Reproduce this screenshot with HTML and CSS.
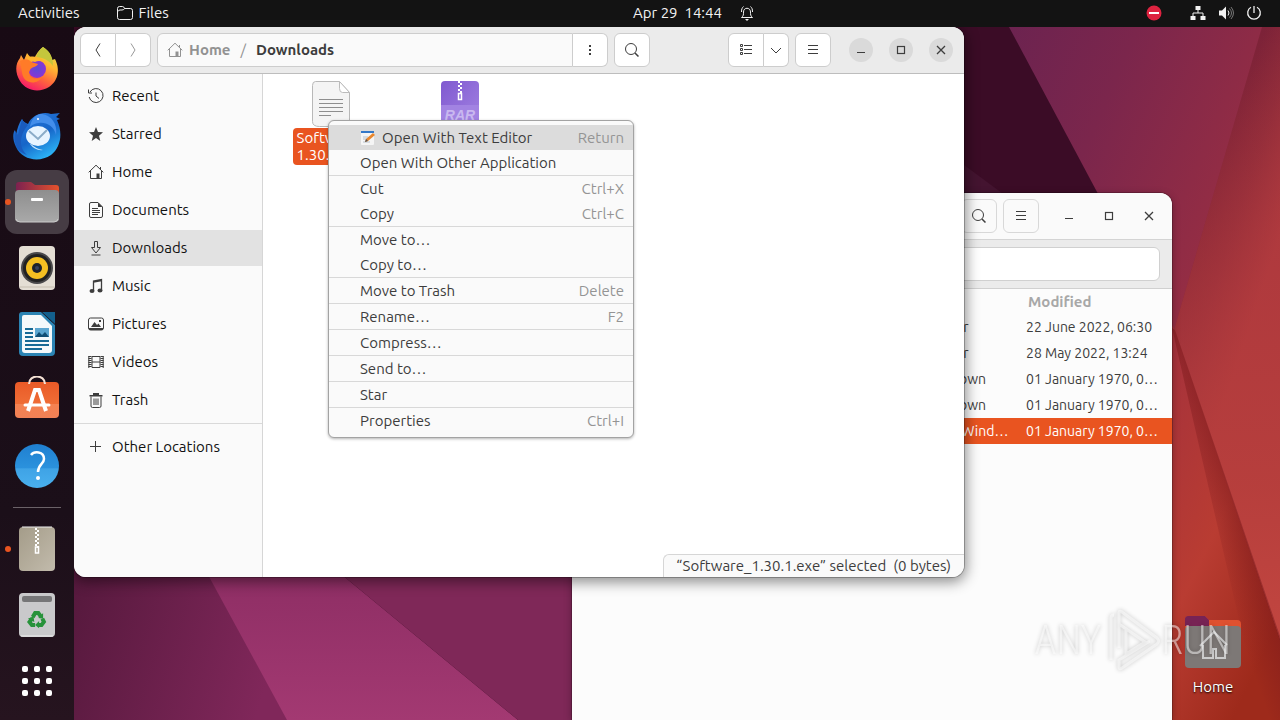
FILE: index.html
```html
<!DOCTYPE html>
<html lang="en">

<head>
    <meta charset="UTF-8">
    <meta name="viewport" content="width=device-width, initial-scale=1.0">
    <title>Files</title>
    <link rel="stylesheet" href="styles.css">
</head>

<body>
    <svg class="sprite" aria-hidden="true">
        <symbol id="i-search" viewBox="0 0 16 16"><circle cx="7" cy="7" r="5.500" fill="none" stroke="currentColor" /><path d="M11 11l3.500 3.500" fill="none" stroke="currentColor" stroke-width="1.500" /></symbol>
        <symbol id="i-menu" viewBox="0 0 16 16"><path d="M3 3.500h10M3 7.500h10M3 11.500h10" fill="none" stroke="currentColor" /></symbol>
        <symbol id="i-min" viewBox="0 0 16 16"><path d="M4 10.500h8" fill="none" stroke="currentColor" stroke-width="1.200" /></symbol>
        <symbol id="i-max" viewBox="0 0 16 16"><rect x="4.500" y="4.500" width="7" height="7" fill="none" stroke="currentColor" stroke-width="1.200" /></symbol>
        <symbol id="i-close" viewBox="0 0 16 16"><path d="M4 4l8 8M12 4l-8 8" fill="none" stroke="currentColor" stroke-width="1.300" /></symbol>
        <symbol id="i-home" viewBox="0 0 16 16"><path d="M.7 8.300L8 1.200l7.300 7.100M2.500 7v7.500h11V7M12.500 5.500V3" fill="none" stroke="currentColor" /><path d="M8.500 9.500h3v5h-3z" fill="currentColor" /></symbol>
    </svg>

    <svg class="wallpaper" viewBox="0 0 1280 720" preserveAspectRatio="none" aria-hidden="true">
        <defs>
            <linearGradient id="w-base" x1="0" y1="0" x2="1" y2="0.600">
                <stop offset="0" stop-color="#6c2350" />
                <stop offset="0.350" stop-color="#7b264c" />
                <stop offset="1" stop-color="#a03040" />
            </linearGradient>
            <linearGradient id="w-right" gradientUnits="userSpaceOnUse" x1="1215" y1="180" x2="1290" y2="205">
                <stop offset="0" stop-color="#7c2238" />
                <stop offset="0.400" stop-color="#8c2a3a" />
                <stop offset="1" stop-color="#ab383f" />
            </linearGradient>
            <linearGradient id="w-mid" x1="0" y1="0" x2="0" y2="1">
                <stop offset="0" stop-color="#b53c3c" stop-opacity="0" />
                <stop offset="0.400" stop-color="#b53c3c" stop-opacity="0.500" />
                <stop offset="0.750" stop-color="#b83f3c" stop-opacity="0.900" />
                <stop offset="1" stop-color="#c24640" />
            </linearGradient>
            <linearGradient id="w-low" x1="0" y1="0" x2="0.600" y2="1">
                <stop offset="0" stop-color="#a1303e" />
                <stop offset="0.600" stop-color="#b93c32" />
                <stop offset="1" stop-color="#9e2a1b" />
            </linearGradient>
            <linearGradient id="w-left" gradientUnits="userSpaceOnUse" x1="74" y1="577" x2="280" y2="640">
                <stop offset="0" stop-color="#56193d" />
                <stop offset="1" stop-color="#80275a" />
            </linearGradient>
            <linearGradient id="w-band" x1="0" y1="0" x2="0" y2="1">
                <stop offset="0" stop-color="#8c2d63" />
                <stop offset="1" stop-color="#a33972" />
            </linearGradient>
            <linearGradient id="w-shade" gradientUnits="userSpaceOnUse" x1="1200" y1="520" x2="1240" y2="506">
                <stop offset="0" stop-color="#7d1a1c" stop-opacity="0" />
                <stop offset="1" stop-color="#7d1a1c" stop-opacity="0.600" />
            </linearGradient>
        </defs>
        <rect width="1280" height="720" fill="#3b0c26" />
        <path d="M1009 27H1280V400H1208z" fill="url(#w-base)" />
        <path d="M960 162l50 37h-50z" fill="#441430" />
        <path d="M1262 27H1280V640L1174 330z" fill="url(#w-right)" />
        <path d="M1262 27H1280V640L1174 330z" fill="url(#w-mid)" />
        <path d="M1160 310l14 18L1280 640V720H1160z" fill="url(#w-low)" />
        <path d="M1172 328l3 2L1280 636V720H1262z" fill="url(#w-shade)" />
        <path d="M0 560H260L290 720H0z" fill="url(#w-left)" />
        <path d="M200 560H324L518 720H287z" fill="url(#w-band)" />
        <path d="M324 560H580V720H518z" fill="#7f2858" />
    </svg>

    <header class="topbar">
        <div class="topbar-left">
            <button class="top-button">Activities</button>
            <button class="top-button">
                <svg class="icon" viewBox="0 0 16 16"><path d="M.5 12.500v-9q0-2 2-2h3q1.500 0 2 2h6q2 0 2 2v7q0 2-2 2h-11q-2 0-2-2zM1 6.500q.5-1.500 2-1.500h2q2 0 2.500-1.500" fill="none" stroke="currentColor" /></svg>
                Files
            </button>
        </div>
        <button class="top-button clock">
            <span>Apr 29&nbsp; 14:44</span>
            <svg class="icon" viewBox="0 0 16 16"><path d="M2.500 12.500c2-1.500 2-3 2-5.500 0-5 7-5 7 0 0 2.500 0 4 2 5.500zM2.500 7c0-3 .5-4 2-5.500M13.500 7c0-3-.5-4-2-5.500" fill="none" stroke="currentColor" /><path d="M6 14h4l-2 2z" fill="currentColor" /></svg>
        </button>
        <div class="tray">
            <button class="top-button" aria-label="Do not disturb"><svg class="icon" viewBox="0 0 16 16"><circle cx="8" cy="8" r="7.500" fill="#dd2340" /><path d="M3 7h10v2H3z" fill="#fff" /></svg></button>
            <button class="top-button status" aria-label="System">
                <svg class="icon" viewBox="0 0 16 16"><path d="M5.500 1h5v4h-5zM.5 11h5v4h-5zM10.500 11h5v4h-5z" fill="currentColor" /><path d="M8 5v3M3 11V8h10v3" fill="none" stroke="currentColor" /></svg>
                <svg class="icon" viewBox="0 0 16 16"><path d="M1 5.500h3L8 1.500v13l-4-4H1z" fill="currentColor" /><path d="M10 5.500q2 2.500 0 5" fill="none" stroke="currentColor" /><path d="M11.500 3.500q4 4.500 0 9M13 2q5 6 0 12" fill="none" stroke="#777" /></svg>
                <svg class="icon" viewBox="0 0 16 16"><path d="M8 1v7M5 2.300a6.300 6.300 0 1 0 6 0" fill="none" stroke="currentColor" stroke-width="1.300" /></svg>
            </button>
        </div>
    </header>

    <nav class="dock" aria-label="Dock">
        <button class="dock-item" aria-label="Firefox">
            <svg viewBox="0 0 48 48">
                <defs>
                    <linearGradient id="ff" x1="0.800" y1="0" x2="0.300" y2="1"><stop offset="0" stop-color="#d9e04b" /><stop offset="0.350" stop-color="#ffb932" /><stop offset="0.650" stop-color="#ff6a3a" /><stop offset="1" stop-color="#f5156c" /></linearGradient>
                    <radialGradient id="ffc"><stop offset="0" stop-color="#5a4bd8" /><stop offset="1" stop-color="#8b35d4" /></radialGradient>
                </defs>
                <path d="M30 1c6 4 8 8 9 13l3-1c6 12 2 23-6 28-10 6-23 4-29-6C2 27 2 18 7 12l1-3 3 5 3-7c2 3 4 5 7 6 2-5 5-9 9-12z" fill="url(#ff)" />
                <path d="M30 1c8 5 10 11 10 19-4-6-12-10-17-8 1-5 4-9 7-11z" fill="#c4c63c" />
                <circle cx="24" cy="23" r="9" fill="url(#ffc)" />
                <path d="M7 15c4-2 9-2 11 1l7 2c-1 3-7 3-8 6-4 7 6 11 12 7-4 8-19 8-20-5z" fill="#ff7b28" />
                <path d="M13 12c6-3 18-2 22 9-4-6-9-7-13-5-4-1-6-2-9-4z" fill="#ffb52e" />
            </svg>
        </button>
        <button class="dock-item" aria-label="Thunderbird">
            <svg viewBox="0 0 48 48">
                <defs><linearGradient id="tb" x1="0" y1="0" x2="0.600" y2="1"><stop offset="0" stop-color="#2a7be0" /><stop offset="0.600" stop-color="#1665c8" /><stop offset="1" stop-color="#2bb0f4" /></linearGradient></defs>
                <path d="M9 7c1 3 4 4 6 5C19 3 30-1 38 2l9-1c-2 1-2 3-4 4l4 2-3 1c6 13 4 27-6 35-12 8-29 5-35-8C-1 27 0 20 2 18l1 5C4 17 6 11 9 7z" fill="url(#tb)" />
                <path d="M15 13C8 21 4 34 14 43 4 40 0 31 2 19l3 4c1-6 3-11 4-16 1 3 4 4 6 6z" fill="#195bbd" />
                <path d="M27 2c11 0 18 10 16 21-2-9-10-13-17-12-3 0-6 1-9 4 1-7 5-12 10-13z" fill="#438eeb" />
                <circle cx="25" cy="7" r="1" fill="#fff" />
                <ellipse cx="25" cy="24" rx="12" ry="10" fill="#e7f4ff" />
                <path d="M16 19l9 8 9-9" fill="none" stroke="#8bacc8" stroke-width="2" />
                <path d="M18 32q5 5 12 6-8 1-13-6z" fill="#c8e6fb" />
            </svg>
        </button>
        <button class="dock-item active running" aria-label="Files">
            <svg viewBox="0 0 48 48">
                <defs><linearGradient id="fo"><stop offset="0" stop-color="#7c2150" /><stop offset="1" stop-color="#e5522c" /></linearGradient><linearGradient id="fg" x1="0" y1="0" x2="0" y2="1"><stop offset="0" stop-color="#8e8e8e" /><stop offset="1" stop-color="#a9a9a9" /></linearGradient></defs>
                <path d="M3 13V7q0-3 3-3h12l4 3h21q3 0 3 3v7H3z" fill="url(#fo)" />
                <rect x="2" y="12" width="44" height="32" rx="4" fill="url(#fg)" />
                <path d="M3 41q1 3 4 3h34q3 0 4-3" fill="none" stroke="#ccc" />
                <rect x="18" y="20" width="12" height="3" rx="1" fill="#fff" />
            </svg>
        </button>
        <button class="dock-item" aria-label="Rhythmbox">
            <svg viewBox="0 0 48 48">
                <rect x="6" y="2" width="36" height="44" rx="4" fill="#e4ded4" /><path d="M7 43h34" stroke="#c6beb0" />
                <circle cx="24" cy="24" r="16" fill="#4a494b" /><circle cx="24" cy="24" r="14" fill="#222" /><circle cx="24" cy="24" r="11" fill="#f4bf22" />
                <circle cx="24" cy="24" r="5" fill="#1d222c" /><circle cx="24" cy="24" r="2" fill="#36425f" />
            </svg>
        </button>
        <button class="dock-item" aria-label="LibreOffice Writer">
            <svg viewBox="0 0 48 48">
                <path d="M9 2h19l14 13v27q0 4-4 4H10q-4 0-4-4V5q0-3 3-3z" fill="#2b84b4" />
                <path d="M29 2h13v12z" fill="#135f8c" />
                <path d="M11 5h17l11 11v24q0 3-3 3H12q-3 0-3-3V7q0-2 2-2z" fill="#f4f9fb" />
                <path d="M12 19h8M12 23h8M12 27h8M12 31h24M12 35h24M12 39h17" stroke="#176a96" stroke-width="2" />
                <path d="M22 18h14v9H22z" fill="#5ba6d0" /><path d="M22 27l4-5 3 3 3-3 4 5z" fill="#114f75" />
            </svg>
        </button>
        <button class="dock-item" aria-label="Ubuntu Software">
            <svg viewBox="0 0 48 48">
                <defs><linearGradient id="us" x1="0" y1="0" x2="0" y2="1"><stop offset="0" stop-color="#e95a27" /><stop offset="0.600" stop-color="#ef6d36" /><stop offset="0.610" stop-color="#f48251" /><stop offset="1" stop-color="#f18156" /></linearGradient></defs>
                <rect x="2" y="6" width="44" height="36" rx="4" fill="url(#us)" />
                <path d="M16 8c0-10 16-10 16 0" fill="none" stroke="#f4e1d4" stroke-width="2" />
                <path d="M15 35l7-21h4l7 21" fill="none" stroke="#fff" stroke-width="4" /><path d="M12 29h24" stroke="#fff" stroke-width="3" stroke-linecap="round" />
            </svg>
        </button>
        <button class="dock-item" aria-label="Help">
            <svg viewBox="0 0 48 48">
                <defs><linearGradient id="hp" x1="0" y1="0" x2="0" y2="1"><stop offset="0" stop-color="#1f7fd0" /><stop offset="0.550" stop-color="#2b92dd" /><stop offset="0.560" stop-color="#3fa3e6" /><stop offset="1" stop-color="#49b0ee" /></linearGradient></defs>
                <circle cx="24" cy="24" r="22" fill="url(#hp)" />
                <path d="M18 13c3-4 13-4 13 4 0 5-6 5-6 13" fill="none" stroke="#fff" stroke-width="2.500" /><circle cx="25" cy="36" r="2" fill="#fff" />
            </svg>
        </button>
        <hr class="dock-line">
        <button class="dock-item running" aria-label="Archive Manager">
            <svg viewBox="0 0 48 48">
                <defs><linearGradient id="ar" x1="0" y1="0" x2="1" y2="1"><stop offset="0" stop-color="#a49c89" /><stop offset="1" stop-color="#c2bbac" /></linearGradient></defs>
                <rect x="6" y="2" width="36" height="44" rx="4" fill="url(#ar)" /><path d="M9 2h30" stroke="#eee" />
                <path d="M23 3v18M25 5v18" stroke="#fff" stroke-width="2" stroke-dasharray="2 2" /><path d="M22.500 22h3v6h-3z" fill="none" stroke="#fff" stroke-width="1.500" />
            </svg>
        </button>
        <button class="dock-item" aria-label="Trash">
            <svg viewBox="0 0 48 48">
                <rect x="6" y="2" width="36" height="44" rx="4" fill="#c9c9cb" /><path d="M8 45h32" stroke="#eee" /><rect x="9" y="5" width="30" height="6" rx="2" fill="#767678" />
                <g transform="translate(4.500 4.500) scale(.8)"><g fill="none" stroke="#27923a" stroke-width="5"><path d="M19 27l3-5h4l3 4" /><path d="M31 29l2 4-3 4h-4" /><path d="M22 37h-4l-3-4 3-4" /></g>
                <path d="M26 28l6 1V22zM27 32v9l-5-4zM13 29l7-3 1 7z" fill="#27923a" /></g>
            </svg>
        </button>
        <button class="dock-item" aria-label="Show Applications">
            <svg viewBox="0 0 48 48" fill="#fff"><rect x="9" y="9" width="6" height="6" rx="2" /><rect x="21" y="9" width="6" height="6" rx="2" /><rect x="33" y="9" width="6" height="6" rx="2" /><rect x="9" y="21" width="6" height="6" rx="2" /><rect x="21" y="21" width="6" height="6" rx="2" /><rect x="33" y="21" width="6" height="6" rx="2" /><rect x="9" y="33" width="6" height="6" rx="2" /><rect x="21" y="33" width="6" height="6" rx="2" /><rect x="33" y="33" width="6" height="6" rx="2" /></svg>
        </button>
    </nav>

    <main class="desktop">
        <a class="desktop-icon" href="#home">
            <svg viewBox="0 0 60 60">
                <path d="M2 14V7q0-3 3-3h17l4 4h28q4 0 4 4v6H2z" fill="#df5130" /><path d="M2 14V7q0-3 3-3h17l4 4v6z" fill="#772354" />
                <rect x="2" y="14" width="56" height="42" rx="4" fill="#7d7876" />
                <path d="M17 34l14-14 13 13M20 33v13h10v-9h3v9h9V33" fill="none" stroke="#ccc" stroke-width="2" />
            </svg>
            Home
        </a>

        <section class="window archive">
            <header class="titlebar">
                <button class="tool" aria-label="Search"><svg class="icon"><use href="#i-search" /></svg></button>
                <button class="tool" aria-label="Menu"><svg class="icon"><use href="#i-menu" /></svg></button>
                <div class="controls">
                    <button class="control" aria-label="Minimize"><svg class="icon"><use href="#i-min" /></svg></button>
                    <button class="control" aria-label="Maximize"><svg class="icon"><use href="#i-max" /></svg></button>
                    <button class="control" aria-label="Close"><svg class="icon"><use href="#i-close" /></svg></button>
                </div>
            </header>
            <div class="location">
                <input class="location-input" type="text" aria-label="Location">
            </div>
            <table class="listing">
                <colgroup>
                    <col>
                    <col class="col-type">
                    <col class="col-date">
                </colgroup>
                <thead>
                    <tr><th></th><th></th><th>Modified</th></tr>
                </thead>
                <tbody>
                    <tr><td></td><td>Folder</td><td>22 June 2022, 06:30</td></tr>
                    <tr><td></td><td>Folder</td><td>28 May 2022, 13:24</td></tr>
                    <tr><td></td><td>unknown</td><td>01 January 1970, 01:00</td></tr>
                    <tr><td></td><td>unknown</td><td>01 January 1970, 01:00</td></tr>
                    <tr class="selected"><td></td><td>DOS/Windows executable</td><td>01 January 1970, 01:00</td></tr>
                </tbody>
            </table>
        </section>

        <section class="window files">
            <header class="titlebar">
                <div class="group">
                    <button class="tool" aria-label="Back"><svg class="icon" viewBox="0 0 16 16"><path d="M10 1.500L6 8l4 6.500" fill="none" stroke="currentColor" /></svg></button>
                    <button class="tool" aria-label="Forward" disabled><svg class="icon" viewBox="0 0 16 16"><path d="M6 1.500L10 8l-4 6.500" fill="none" stroke="currentColor" /></svg></button>
                </div>
                <div class="group path">
                    <div class="crumbs">
                        <a class="crumb" href="#home"><svg class="icon"><use href="#i-home" /></svg>Home</a>
                        <span class="slash">/</span>
                        <a class="crumb current" href="#downloads">Downloads</a>
                    </div>
                    <button class="tool" aria-label="Folder menu"><svg class="icon" viewBox="0 0 16 16"><path d="M7 3h2v2H7zM7 7h2v2H7zM7 11h2v2H7z" fill="currentColor" /></svg></button>
                </div>
                <button class="tool" aria-label="Search"><svg class="icon"><use href="#i-search" /></svg></button>
                <div class="group view">
                    <button class="tool" aria-label="List view"><svg class="icon" viewBox="0 0 16 16"><path d="M2.500 2.500h2v2h-2zM2.500 6.500h2v2h-2zM2.500 10.500h2v2h-2zM6 3.500h8M6 7.500h8M6 11.500h8" fill="none" stroke="currentColor" /></svg></button>
                    <button class="tool narrow" aria-label="View options"><svg class="icon" viewBox="0 0 16 16"><path d="M3 6l5 5 5-5" fill="none" stroke="currentColor" /></svg></button>
                </div>
                <button class="tool" aria-label="Menu"><svg class="icon"><use href="#i-menu" /></svg></button>
                <div class="controls">
                    <button class="control" aria-label="Minimize"><svg class="icon"><use href="#i-min" /></svg></button>
                    <button class="control" aria-label="Maximize"><svg class="icon"><use href="#i-max" /></svg></button>
                    <button class="control" aria-label="Close"><svg class="icon"><use href="#i-close" /></svg></button>
                </div>
            </header>
            <div class="window-body">
                <nav class="sidebar" aria-label="Places">
                    <a class="place" href="#recent"><svg class="icon" viewBox="0 0 16 16"><path d="M2 4a7 7 0 1 1-.8 5M.5 1.500V5H4M8 4.500V8l3 2.500" fill="none" stroke="currentColor" /></svg>Recent</a>
                    <a class="place" href="#starred"><svg class="icon" viewBox="0 0 16 16"><path d="M8 1l2 5 5 .3-4 3.400 1.300 5.300L8 12l-4.300 3L5 9.700 1 6.300 6 6z" fill="currentColor" /></svg>Starred</a>
                    <a class="place" href="#home"><svg class="icon"><use href="#i-home" /></svg>Home</a>
                    <a class="place" href="#documents"><svg class="icon" viewBox="0 0 16 16"><path d="M3 .5h7l4.500 4.500v9q0 1.500-1.500 1.500H3q-1.500 0-1.500-1.500V2q0-1.500 1.500-1.500zM4 6.500h6M4 8.500h8M4 10.500h8M4 12.500h6" fill="none" stroke="currentColor" /><path d="M10 .5V5h4.500z" fill="currentColor" /></svg>Documents</a>
                    <a class="place current" href="#downloads"><svg class="icon" viewBox="0 0 16 16"><path d="M6.500 1.500h3v6h3L8 13 3.500 7.500h3zM3.500 15h9" fill="none" stroke="currentColor" /></svg>Downloads</a>
                    <a class="place" href="#music"><svg class="icon" viewBox="0 0 16 16"><path d="M5.500 13V3l8-1.500V12M5.500 4l8-1.500" fill="none" stroke="currentColor" stroke-width="1.300" /><ellipse cx="4" cy="13" rx="2.500" ry="2" fill="currentColor" /><ellipse cx="12" cy="12.500" rx="2.500" ry="2" fill="currentColor" /></svg>Music</a>
                    <a class="place" href="#pictures"><svg class="icon" viewBox="0 0 16 16"><rect x=".5" y="2" width="15" height="12" rx="2" fill="none" stroke="currentColor" /><path d="M3 11l3.500-5L9 9l1.500-1.500L13 11zM11 4h2v2h-2zM1 12h14v2H1z" fill="currentColor" /></svg>Pictures</a>
                    <a class="place" href="#videos"><svg class="icon" viewBox="0 0 16 16"><path d="M4 2.500h8v11H4zM4 8h8" fill="none" stroke="currentColor" /><path d="M2 2v12M14 2v12" stroke="currentColor" stroke-width="3" stroke-dasharray="1 1" /><path d="M.8 2v12M15.200 2v12" stroke="currentColor" /></svg>Videos</a>
                    <a class="place" href="#trash"><svg class="icon" viewBox="0 0 16 16"><path d="M1.500 3h13v1.500h-13zM5 1h6v2H5z" fill="currentColor" /><path d="M3 4.500V14q0 1.500 1.500 1.500h7Q13 15.500 13 14V4.500M6 6.500V13M8 6.500V13M10 6.500V13" fill="none" stroke="currentColor" /></svg>Trash</a>
                    <hr class="sidebar-line">
                    <a class="place" href="#other"><svg class="icon" viewBox="0 0 16 16"><path d="M7.500 2v11M2 7.500h11" fill="none" stroke="currentColor" /></svg>Other Locations</a>
                </nav>
                <div class="content">
                    <div class="file-grid">
                        <a class="file selected" href="#software">
                            <svg viewBox="0 0 48 48"><path d="M8.500 1.500h24l10 11v29q0 5-5 5h-25q-7 0-7-5v-36q0-4 3-4z" fill="#f4f4f4" stroke="#b8b8b8" /><path d="M32.500 1.500l10 11h-7q-3 0-3-4z" fill="#fff" stroke="#bbb" /><path d="M12 19.500h24M12 23.500h24M12 27.500h24M12 31.500h24M12 35.500h12" stroke="#8e8e8e" /></svg>
                            <span class="file-name">Software_<br>1.30.1.exe</span>
                        </a>
                        <a class="file" href="#archive" aria-label="RAR archive">
                            <svg viewBox="0 0 48 48">
                                <defs><linearGradient id="rr" x1="0" y1="0" x2="1" y2="1"><stop offset="0" stop-color="#8059d0" /><stop offset="1" stop-color="#a283e2" /></linearGradient></defs>
                                <rect x="5" y="1" width="38" height="46" rx="4" fill="url(#rr)" /><path d="M5 25h38v18q0 4-4 4H9q-4 0-4-4z" fill="#a283e2" />
                                <path d="M23 1v12M25 3v10" stroke="#fff" stroke-width="2" stroke-dasharray="2 2" /><path d="M22.500 13.500h3v6h-3z" fill="none" stroke="#fff" stroke-width="1.500" />
                                <text class="rar-text" x="24" y="40" text-anchor="middle">RAR</text>
                            </svg>
                        </a>
                    </div>
                    <p class="statusbar">“Software_1.30.1.exe” selected&nbsp; (0 bytes)</p>
                </div>
            </div>
        </section>

        <div class="context-menu" role="menu">
            <button class="menu-item highlighted" role="menuitem">
                <svg class="icon" viewBox="0 0 16 16"><rect x="1" y="1" width="13" height="14" rx="1" fill="#f5f5f5" /><path d="M1 1h13v2H1z" fill="#3478c8" /><path d="M3 7h5M3 9h4M3 12h7" stroke="#b8c3ce" /><path d="M5 12l1-3 7-6 2 2-7 6z" fill="#e8872e" /><path d="M5 12l1-3 2 2z" fill="#555" /></svg>
                <span>Open With Text Editor</span><kbd>Return</kbd>
            </button>
            <button class="menu-item" role="menuitem"><span>Open With Other Application</span></button>
            <hr>
            <button class="menu-item" role="menuitem"><span>Cut</span><kbd>Ctrl+X</kbd></button>
            <button class="menu-item" role="menuitem"><span>Copy</span><kbd>Ctrl+C</kbd></button>
            <hr>
            <button class="menu-item" role="menuitem"><span>Move to…</span></button>
            <button class="menu-item" role="menuitem"><span>Copy to…</span></button>
            <hr>
            <button class="menu-item" role="menuitem"><span>Move to Trash</span><kbd>Delete</kbd></button>
            <hr>
            <button class="menu-item" role="menuitem"><span>Rename…</span><kbd>F2</kbd></button>
            <hr>
            <button class="menu-item" role="menuitem"><span>Compress…</span></button>
            <hr>
            <button class="menu-item" role="menuitem"><span>Send to…</span></button>
            <hr>
            <button class="menu-item" role="menuitem"><span>Star</span></button>
            <hr>
            <button class="menu-item" role="menuitem"><span>Properties</span><kbd>Ctrl+I</kbd></button>
        </div>

        <div class="watermark">
            <span>ANY</span>
            <svg viewBox="0 0 60 66"><path d="M9 52V10q0-3 3-3M17 40V5q0-3 3-1l35 26q3 3 0 6L20 60q-3 2-3-1v-7L48 33M17 16l26 18-19 12V22" fill="none" stroke="currentColor" stroke-width="3" /></svg>
            <span>RUN</span>
        </div>
    </main>
</body>

</html>
```

FILE: styles.css
```css
* {
    box-sizing: border-box;
}

body {
    margin: 0;
    height: 100vh;
    display: grid;
    grid-template-columns: 74px 1fr;
    grid-template-rows: 27px 1fr;
    overflow: hidden;
    font-family: Ubuntu, "Noto Sans", sans-serif;
    font-size: 15px;
    line-height: 16px;
    color: #3d3d3d;
}

button {
    margin: 0;
    padding: 0;
    border: none;
    background: none;
    font: inherit;
    color: inherit;
}

a {
    color: inherit;
    text-decoration: none;
}

.sprite {
    position: absolute;
    width: 0;
    height: 0;
}

.icon {
    width: 16px;
    height: 16px;
    flex: none;
}

.wallpaper {
    position: absolute;
    width: 100%;
    height: 100%;
    z-index: -1;
}

/* top bar */

.topbar {
    grid-column: 1 / 3;
    display: grid;
    grid-template-columns: 1fr auto 1fr;
    align-items: center;
    padding: 0 18px 1px;
    background-color: #131313;
    color: #f2f2f2;
}

.topbar-left {
    display: flex;
    gap: 37px;
}

.top-button {
    display: flex;
    align-items: center;
    gap: 6px;
}

.clock {
    gap: 17px;
    padding-left: 108px;
}

.tray {
    display: flex;
    justify-content: flex-end;
    gap: 28px;
}

.status {
    gap: 12px;
}

/* dock */

.dock {
    display: flex;
    flex-direction: column;
    align-items: center;
    gap: 2px;
    padding-top: 11px;
    background: linear-gradient(#180a14, #1b0f19 70%, #26141f);
}

.dock-item {
    position: relative;
    width: 64px;
    height: 64px;
    padding: 8px;
    border-radius: 12px;
    flex: none;
}

.dock-item svg {
    display: block;
    width: 48px;
    height: 48px;
}

.dock-item.active {
    background-color: #463c44;
}

.dock-item.running::before {
    content: "";
    position: absolute;
    left: 0;
    top: 29px;
    width: 6px;
    height: 6px;
    border-radius: 50%;
    background-color: #e95420;
}

.dock-line {
    width: 48px;
    height: 1px;
    margin: 7px 0;
    border: none;
    background-color: #6b6268;
}

/* windows */

.desktop {
    position: relative;
    overflow: hidden;
}

.window {
    position: absolute;
    display: flex;
    flex-direction: column;
    overflow: hidden;
    background-color: #fcfcfc;
}

.archive {
    left: 498px;
    right: 108px;
    top: 166px;
    bottom: 0;
    border-radius: 12px 12px 0 0;
    box-shadow: 0 0 0 1px rgba(0, 0, 0, 0.2), 0 2px 8px rgba(0, 0, 0, 0.3);
}

.files {
    left: 0;
    right: 316px;
    top: 0;
    bottom: 143px;
    border-radius: 12px;
    background-color: #fff;
    box-shadow: 0 0 0 1px rgba(0, 0, 0, 0.25), 0 3px 14px 2px rgba(0, 0, 0, 0.45);
}

.titlebar {
    display: flex;
    align-items: center;
    gap: 6px;
    height: 47px;
    padding: 0 5px 0 6px;
    border-bottom: 1px solid #bdbdbd;
    background-color: #ebebeb;
    flex: none;
}

.archive .titlebar {
    justify-content: flex-end;
    border-color: #d4d4d4;
    background-color: #fafafa;
}

.tool {
    display: flex;
    align-items: center;
    justify-content: center;
    width: 36px;
    height: 34px;
    border: 1px solid #cdcdcd;
    border-radius: 6px;
    background-color: #fff;
    flex: none;
}

.archive .tool {
    background-color: #fafafa;
    border-color: #d8d8d8;
}

.tool:disabled {
    color: #999;
}

.tool.narrow {
    width: 25px;
}

.group {
    display: flex;
}

.group > :first-child {
    border-radius: 6px 0 0 6px;
}

.group > :last-child {
    border-left: none;
    border-radius: 0 6px 6px 0;
}

.group > .tool:last-child:not(.narrow) {
    width: 35px;
}

.path {
    width: 451px;
}

.crumbs {
    display: flex;
    align-items: center;
    gap: 10px;
    flex: 1;
    padding-left: 9px;
    border: 1px solid #cdcdcd;
    background-color: #fafafa;
    font-weight: bold;
    color: #929292;
}

.crumb {
    display: flex;
    align-items: center;
    gap: 6px;
}

.crumb.current {
    color: #3d3d3d;
}

.slash {
    font-weight: normal;
}

.view {
    margin-left: auto;
}

.controls {
    display: flex;
    gap: 16px;
    padding: 0 6px 0 12px;
}

.control {
    display: flex;
    align-items: center;
    justify-content: center;
    width: 24px;
    height: 24px;
    border-radius: 50%;
}

.files .control {
    background-color: #dadada;
}

.window-body {
    display: flex;
    flex: 1;
    min-height: 0;
}

.sidebar {
    display: flex;
    flex-direction: column;
    gap: 2px;
    width: 189px;
    padding-top: 4px;
    border-right: 1px solid #d6d6d6;
    background-color: #fafafa;
    color: #111;
}

.place {
    display: flex;
    align-items: center;
    gap: 8px;
    height: 36px;
    padding: 0 14px;
}

.place .icon {
    color: #3d3d3d;
}

.place.current {
    background-color: #e2e2e2;
}

.sidebar-line {
    width: 100%;
    height: 1px;
    margin: 3px 0;
    border: none;
    background-color: #d9d9d9;
}

.content {
    display: flex;
    flex-direction: column;
    justify-content: space-between;
    flex: 1;
}

.file-grid {
    display: flex;
    gap: 53px;
    padding: 6px 30px;
}

.file {
    display: flex;
    flex-direction: column;
    align-items: center;
    width: 76px;
    text-align: center;
}

.file svg {
    width: 48px;
    height: 48px;
}

.file-name {
    width: 76px;
    padding: 1px 0 2px;
    border-radius: 4px;
    line-height: 17px;
}

.file.selected .file-name {
    background-color: #e95420;
    color: #fff;
}

.rar-text {
    font-family: "Liberation Sans", sans-serif;
    font-size: 14px;
    font-style: italic;
    font-weight: bold;
    fill: #c9b8f0;
}

.statusbar {
    align-self: flex-end;
    margin: 0;
    padding: 3px 13px 3px 12px;
    border: 1px solid #d6d6d6;
    border-width: 1px 0 0 1px;
    border-radius: 6px 0 0 0;
    background-color: #fafafa;
}

.location {
    padding: 7px 12px;
    border-bottom: 1px solid #d0d0d0;
    background-color: #ebebeb;
}

.location-input {
    display: block;
    width: 100%;
    height: 34px;
    padding: 0 8px;
    border: 1px solid #d0d0d0;
    border-radius: 6px;
    background-color: #fff;
    font: inherit;
}

.listing {
    width: 100%;
    table-layout: fixed;
    border-collapse: collapse;
}

.col-type {
    width: 98px;
}

.col-date {
    width: 152px;
}

.listing th,
.listing td {
    height: 26px;
    padding: 0 8px 0 6px;
    overflow: hidden;
    text-overflow: ellipsis;
    white-space: nowrap;
    text-align: left;
}

.listing td {
    font-size: 14px;
}

.listing th {
    height: 25px;
    padding-left: 8px;
    color: #a8a8a8;
}

.listing .selected {
    background-color: #e95420;
    color: #fff;
}

/* context menu */

.context-menu {
    position: absolute;
    left: 254px;
    top: 93px;
    width: 306px;
    padding: 4px 0;
    border: 1px solid #a3a3a3;
    border-radius: 6px;
    background-color: #fafafa;
    box-shadow: 0 1px 3px rgba(0, 0, 0, 0.3);
}

.context-menu hr {
    height: 1px;
    margin: 0;
    border: none;
    background-color: #d8d8d8;
}

.menu-item {
    display: flex;
    align-items: center;
    gap: 6px;
    width: 100%;
    height: 25px;
    padding: 0 9px 0 31px;
}

.menu-item.highlighted {
    background-color: #dcdcdc;
}

.menu-item kbd {
    margin-left: auto;
    font: inherit;
    color: #949494;
}

/* desktop icon and overlay */

.desktop-icon {
    position: absolute;
    right: 37px;
    bottom: 25px;
    display: flex;
    flex-direction: column;
    align-items: center;
    gap: 7px;
    color: #fff;
    text-shadow: 0 1px 2px #000;
}

.desktop-icon svg {
    width: 60px;
    height: 60px;
}

.watermark {
    position: absolute;
    right: 49px;
    bottom: 46px;
    display: flex;
    align-items: center;
    font-family: "Roboto Condensed", "Ubuntu Condensed", "Liberation Sans Narrow", "Liberation Sans", sans-serif;
    font-size: 40px;
    font-weight: 300;
    line-height: 66px;
    color: rgba(255, 255, 255, 0.5);
    filter: drop-shadow(0 0 2px rgba(0, 0, 0, 0.4));
    pointer-events: none;
}

.watermark svg {
    width: 60px;
    height: 66px;
}
```
